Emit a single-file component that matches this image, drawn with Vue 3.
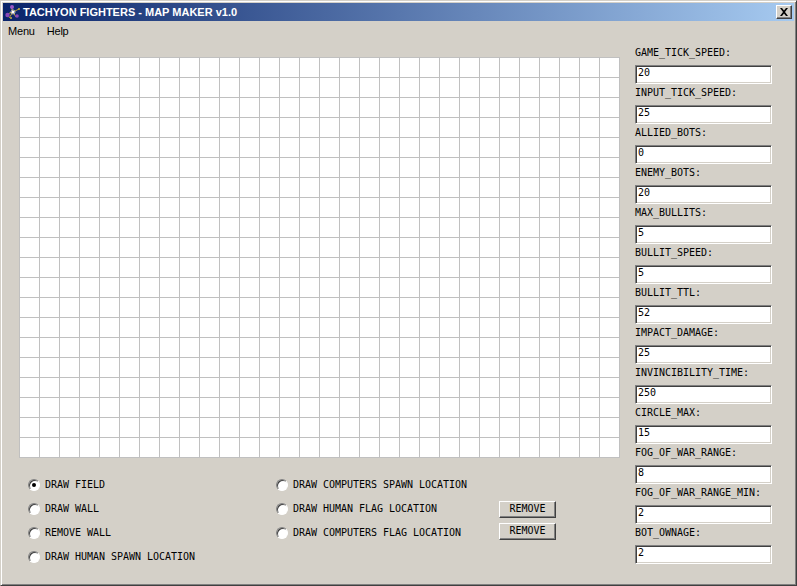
<script setup>
const fields = [
  ['GAME_TICK_SPEED:', '20'],
  ['INPUT_TICK_SPEED:', '25'],
  ['ALLIED_BOTS:', '0'],
  ['ENEMY_BOTS:', '20'],
  ['MAX_BULLITS:', '5'],
  ['BULLIT_SPEED:', '5'],
  ['BULLIT_TTL:', '52'],
  ['IMPACT_DAMAGE:', '25'],
  ['INVINCIBILITY_TIME:', '250'],
  ['CIRCLE_MAX:', '15'],
  ['FOG_OF_WAR_RANGE:', '8'],
  ['FOG_OF_WAR_RANGE_MIN:', '2'],
  ['BOT_OWNAGE:', '2']
]
const leftOptions = [
  ['DRAW FIELD', true],
  ['DRAW WALL', false],
  ['REMOVE WALL', false],
  ['DRAW HUMAN SPAWN LOCATION', false]
]
const midOptions = ['DRAW COMPUTERS SPAWN LOCATION', 'DRAW HUMAN FLAG LOCATION', 'DRAW COMPUTERS FLAG LOCATION']
</script>

<template>
  <div class="window">
    <div class="titlebar">
      <svg class="appicon" width="16" height="16" viewBox="0 0 16 16">
        <path d="M8 8L6 3M8 8L2 10M8 8L14 5M8 8L11 13M8 8L4 14" stroke="#b8a038" stroke-width="1"/>
        <path d="M8 5.500L8 10.500M5.500 8L10.500 8M6.500 6.500L9.500 9.500M9.500 6.500L6.500 9.500" stroke="#ffffff" stroke-width="1"/>
        <circle cx="7" cy="3" r="2" fill="#9a58c8"/>
        <circle cx="2.500" cy="11" r="2.200" fill="#8a48b8"/>
        <circle cx="12" cy="12" r="1.800" fill="#8a48b8"/>
        <circle cx="14" cy="5" r="1" fill="#c8b040"/>
        <circle cx="6" cy="14" r="1" fill="#c8b040"/>
      </svg>
      <span class="title">TACHYON FIGHTERS - MAP MAKER v1.0</span>
      <div class="close">
        <svg width="10" height="8" viewBox="0 0 10 8"><path d="M1 0h2l2 2.500L7 0h2L6 4l3 4H7L5 5.500 3 8H1l3-4z" fill="#000"/></svg>
      </div>
    </div>
    <div class="menubar"><span>Menu</span><span>Help</span></div>
    <div class="content">
      <div class="main">
        <div class="grid"></div>
        <div class="options">
          <div class="col left">
            <label v-for="o in leftOptions" :key="o[0]" class="opt">
              <span class="radio" :class="{ on: o[1] }"></span><span class="opt-text">{{ o[0] }}</span>
            </label>
          </div>
          <div class="col mid">
            <label v-for="o in midOptions" :key="o" class="opt">
              <span class="radio"></span><span class="opt-text">{{ o }}</span>
            </label>
          </div>
          <div class="col btns">
            <button class="btn">REMOVE</button>
            <button class="btn">REMOVE</button>
          </div>
        </div>
      </div>
      <div class="side">
        <div v-for="f in fields" :key="f[0]" class="field">
          <div class="lab">{{ f[0] }}</div>
          <div class="input">{{ f[1] }}</div>
        </div>
      </div>
    </div>
  </div>
</template>

<style>
html, body { margin: 0; padding: 0; background: #d4d0c8; overflow: hidden; }
</style>

<style scoped>
.window {
  width: 797px;
  height: 586px;
  box-sizing: border-box;
  background: #d4d0c8;
  border: 1px solid;
  border-color: #d4d0c8 #404040 #404040 #d4d0c8;
  box-shadow: inset 1px 1px 0 #fff, inset -1px -1px 0 #808080;
  padding: 2px;
  display: flex;
  flex-direction: column;
  font-family: "DejaVu Sans Mono", "Liberation Mono", monospace;
  font-size: 10px;
  letter-spacing: -0.02px;
  color: #000;
}
.titlebar {
  height: 18px;
  flex: none;
  display: flex;
  align-items: center;
  background: linear-gradient(90deg, #0a246a, #a6caf0);
  padding: 0 2px 0 2px;
  letter-spacing: 0;
}
.appicon { flex: none; margin-right: 2px; }
.title {
  font-family: "Liberation Sans", Arial, sans-serif;
  font-weight: 700;
  font-size: 11px;
  color: #fff;
  flex: 1;
  white-space: nowrap;
}
.close {
  width: 16px;
  height: 14px;
  box-sizing: border-box;
  background: #d4d0c8;
  border: 1px solid;
  border-color: #fff #404040 #404040 #fff;
  box-shadow: inset -1px -1px 0 #808080;
  display: flex;
  align-items: center;
  justify-content: center;
}
.menubar {
  height: 19px;
  flex: none;
  display: flex;
  align-items: center;
  gap: 12px;
  padding-left: 5px;
  font-family: "Liberation Sans", Arial, sans-serif;
  font-size: 11px;
  letter-spacing: -0.2px;
}
.content { flex: 1; display: flex; min-height: 0; }
.main { width: 631px; flex: none; padding: 17px 0 0 16px; box-sizing: border-box; }
.grid {
  width: 601px;
  height: 401px;
  background-color: #fff;
  background-image:
    linear-gradient(90deg, #c0c0c0 1px, transparent 1px),
    linear-gradient(180deg, #c0c0c0 1px, transparent 1px);
  background-size: 20px 20px;
}
.options { display: flex; padding: 15px 0 0 9px; }
.col { display: flex; flex-direction: column; }
.left { width: 248px; flex: none; }
.mid { width: 223px; flex: none; }
.opt { height: 24px; display: flex; align-items: center; white-space: pre; }
.opt-text { padding-bottom: 2px; }
.radio {
  width: 12px;
  height: 12px;
  flex: none;
  box-sizing: border-box;
  margin-right: 5px;
  border-radius: 50%;
  background: #fff;
  border: 1px solid;
  border-color: #808080 #fff #fff #808080;
  box-shadow: inset 1px 1px 0 #404040;
  display: flex;
  align-items: center;
  justify-content: center;
}
.radio.on::after {
  content: "";
  width: 4px;
  height: 4px;
  border-radius: 50%;
  background: #000;
}
.btns { padding-top: 28px; gap: 5px; }
.btn {
  width: 57px;
  height: 17px;
  box-sizing: border-box;
  padding: 0 0 2px;
  background: #d4d0c8;
  border: 1px solid;
  border-color: #fff #404040 #404040 #fff;
  box-shadow: inset -1px -1px 0 #808080;
  font: inherit;
  letter-spacing: inherit;
  color: #000;
}
.side { flex: 1; display: flex; flex-direction: column; padding: 5px 0 0 1px; }
.field { height: 40px; flex: none; }
.lab { height: 20px; line-height: 16px; white-space: pre; }
.input {
  width: 137px;
  height: 19px;
  box-sizing: border-box;
  background: #fff;
  border: 1px solid;
  border-color: #808080 #fff #fff #808080;
  box-shadow: inset 1px 1px 0 #404040, inset -1px -1px 0 #d4d0c8;
  padding: 1px 0 0 2px;
  line-height: 12px;
}
</style>
